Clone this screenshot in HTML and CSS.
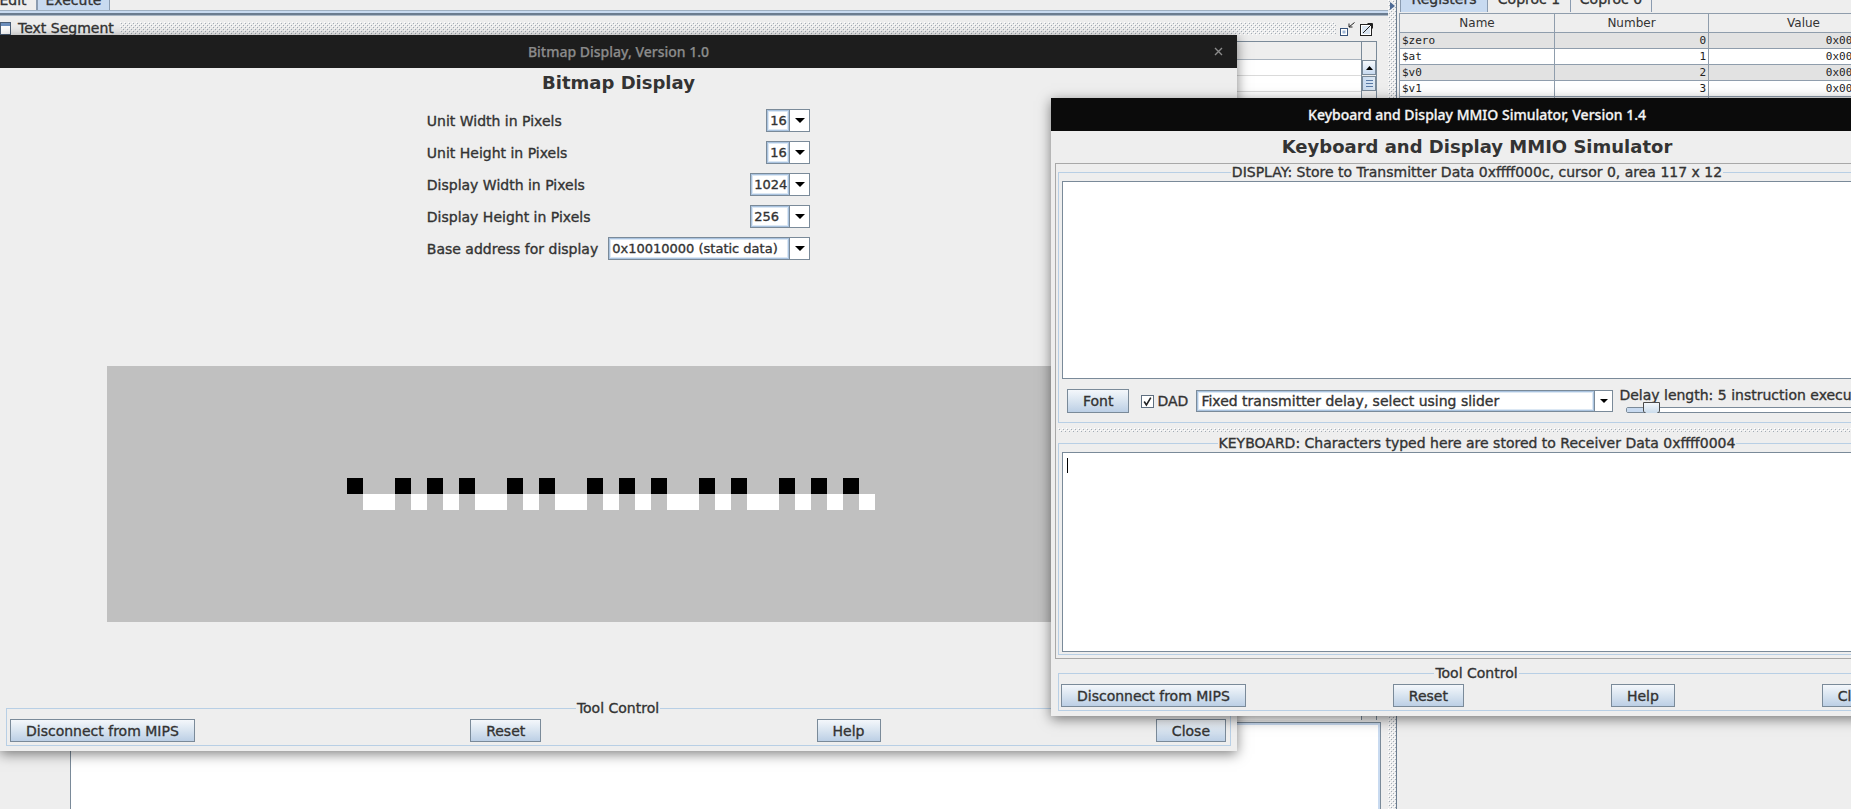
FILE: index.html
```html
<!DOCTYPE html>
<html lang="en">
<head>
<meta charset="utf-8">
<title>MARS - Bitmap Display / MMIO Simulator</title>
<link rel="stylesheet" href="styles.css">
</head>
<body>
<div class="desktop">
  <div class="ide">
    <div class="main">
      <div class="tabs">
        <div class="tab tab-edit"><span>Edit</span></div>
        <div class="tab tab-sel tab-exec"><span>Execute</span></div>
      </div>
      <div class="tabline"></div>
      <div class="iframe">
        <div class="if-head">
          <svg class="if-icon" width="11" height="13" viewBox="0 0 11 13"><rect x="0.5" y="0.5" width="10" height="12" fill="#fff" stroke="#4a5d75"/><rect x="1" y="1" width="9" height="3" fill="#6d8fbd"/></svg>
          <span class="if-title">Text Segment</span>
          <div class="bumps if-bumps"></div>
          <svg class="if-btn" width="16" height="14" viewBox="0 0 16 14"><rect x="0.5" y="6.5" width="7" height="7" fill="#fff" stroke="#36527a"/><rect x="2.5" y="8.5" width="3" height="3" fill="#9db6d6"/><path d="M9 5 L14.5 0.5" stroke="#222" fill="none"/><path d="M9 1.5 V5 H12.5" stroke="#222" fill="none"/></svg>
          <svg class="if-btn" width="14" height="14" viewBox="0 0 14 14"><rect x="0.5" y="2.5" width="11" height="11" fill="#fff" stroke="#222"/><rect x="2" y="4" width="8" height="8" fill="#dbe6f2"/><path d="M3 11 L11.5 2.5" stroke="#222" fill="none"/><path d="M7.5 1.5 H12.5 V6.5" stroke="#222" fill="none"/></svg>
        </div>
        <div class="if-body">
          <div class="ts-table">
            <div class="ts-head"></div>
            <div class="ts-row"></div>
            <div class="ts-row"></div>
            <div class="ts-row"></div>
            <div class="ts-row"></div>
            <div class="ts-row"></div>
            <div class="ts-row"></div>
          </div>
          <div class="vscroll">
            <div class="sb-btn"><svg width="7" height="4" viewBox="0 0 7 4"><path d="M0 4 H7 L3.5 0 Z" fill="#000"/></svg></div>
            <div class="sb-thumb"><i></i><i></i><i></i></div>
          </div>
        </div>
      </div>
      <div class="dataseg">
        <div class="ds-left"></div>
        <div class="ds-white"></div>
      </div>
    </div>
    <div class="vsplit bumps"><svg class="vs-arrow" width="5" height="8" viewBox="0 0 5 8"><path d="M0 0 L5 4 L0 8 Z" fill="#4d6a94"/></svg></div>
    <div class="regs">
      <div class="rtabs">
        <div class="rtab rt1"><span>Registers</span></div>
        <div class="rtab rt2"><span>Coproc 1</span></div>
        <div class="rtab rt3"><span>Coproc 0</span></div>
      </div>
      <table class="rtable">
        <colgroup><col class="col-name"><col class="col-num"><col class="col-val"></colgroup>
        <thead><tr><th>Name</th><th>Number</th><th>Value</th></tr></thead>
        <tbody>
          <tr><td>$zero</td><td class="r">0</td><td class="r v">0x00000000</td></tr>
          <tr><td>$at</td><td class="r">1</td><td class="r v">0x00000000</td></tr>
          <tr><td>$v0</td><td class="r">2</td><td class="r v">0x00000000</td></tr>
          <tr><td>$v1</td><td class="r">3</td><td class="r v">0x00000000</td></tr>
          <tr><td>$a0</td><td class="r">4</td><td class="r v">0x00000000</td></tr>
          <tr><td>$a1</td><td class="r">5</td><td class="r v">0x00000000</td></tr>
          <tr><td>$a2</td><td class="r">6</td><td class="r v">0x00000000</td></tr>
          <tr><td>$a3</td><td class="r">7</td><td class="r v">0x00000000</td></tr>
          <tr><td>$t0</td><td class="r">8</td><td class="r v">0x00000000</td></tr>
          <tr><td>$t1</td><td class="r">9</td><td class="r v">0x00000000</td></tr>
          <tr><td>$t2</td><td class="r">10</td><td class="r v">0x00000000</td></tr>
          <tr><td>$t3</td><td class="r">11</td><td class="r v">0x00000000</td></tr>
          <tr><td>$t4</td><td class="r">12</td><td class="r v">0x00000000</td></tr>
          <tr><td>$t5</td><td class="r">13</td><td class="r v">0x00000000</td></tr>
          <tr><td>$t6</td><td class="r">14</td><td class="r v">0x00000000</td></tr>
          <tr><td>$t7</td><td class="r">15</td><td class="r v">0x00000000</td></tr>
          <tr><td>$s0</td><td class="r">16</td><td class="r v">0x00000000</td></tr>
          <tr><td>$s1</td><td class="r">17</td><td class="r v">0x00000000</td></tr>
          <tr><td>$s2</td><td class="r">18</td><td class="r v">0x00000000</td></tr>
          <tr><td>$s3</td><td class="r">19</td><td class="r v">0x00000000</td></tr>
          <tr><td>$s4</td><td class="r">20</td><td class="r v">0x00000000</td></tr>
          <tr><td>$s5</td><td class="r">21</td><td class="r v">0x00000000</td></tr>
          <tr><td>$s6</td><td class="r">22</td><td class="r v">0x00000000</td></tr>
          <tr><td>$s7</td><td class="r">23</td><td class="r v">0x00000000</td></tr>
          <tr><td>$t8</td><td class="r">24</td><td class="r v">0x00000000</td></tr>
          <tr><td>$t9</td><td class="r">25</td><td class="r v">0x00000000</td></tr>
          <tr><td>$k0</td><td class="r">26</td><td class="r v">0x00000000</td></tr>
          <tr><td>$k1</td><td class="r">27</td><td class="r v">0x00000000</td></tr>
          <tr><td>$gp</td><td class="r">28</td><td class="r v">0x10008000</td></tr>
          <tr><td>$sp</td><td class="r">29</td><td class="r v">0x7fffeffc</td></tr>
          <tr><td>$fp</td><td class="r">30</td><td class="r v">0x00000000</td></tr>
          <tr><td>$ra</td><td class="r">31</td><td class="r v">0x00000000</td></tr>
          <tr><td>pc</td><td class="r"></td><td class="r v">0x00400000</td></tr>
          <tr><td>hi</td><td class="r"></td><td class="r v">0x00000000</td></tr>
          <tr><td>lo</td><td class="r"></td><td class="r v">0x00000000</td></tr>
        </tbody>
      </table>
    </div>
  </div>

  <div class="win bitmap">
    <div class="titlebar">
      <span class="ttl">Bitmap Display, Version 1.0</span>
      <svg class="tb-close" width="9" height="9" viewBox="0 0 9 9"><path d="M1 1 L8 8 M8 1 L1 8" stroke="#8b8b8b" stroke-width="1.4"/></svg>
    </div>
    <div class="heading">Bitmap Display</div>
    <div class="settings">
      <div class="set-lbl">Unit Width in Pixels</div>
      <div class="combo"><div class="combo-text cw-s">16</div><div class="combo-arrow"><svg width="10" height="5" viewBox="0 0 10 5"><path d="M0 0 H10 L5 5 Z" fill="#000"/></svg></div></div>
      <div class="set-lbl">Unit Height in Pixels</div>
      <div class="combo"><div class="combo-text cw-s">16</div><div class="combo-arrow"><svg width="10" height="5" viewBox="0 0 10 5"><path d="M0 0 H10 L5 5 Z" fill="#000"/></svg></div></div>
      <div class="set-lbl">Display Width in Pixels</div>
      <div class="combo"><div class="combo-text cw-m">1024</div><div class="combo-arrow"><svg width="10" height="5" viewBox="0 0 10 5"><path d="M0 0 H10 L5 5 Z" fill="#000"/></svg></div></div>
      <div class="set-lbl">Display Height in Pixels</div>
      <div class="combo"><div class="combo-text cw-m">256</div><div class="combo-arrow"><svg width="10" height="5" viewBox="0 0 10 5"><path d="M0 0 H10 L5 5 Z" fill="#000"/></svg></div></div>
      <div class="set-lbl">Base address for display</div>
      <div class="combo"><div class="combo-text cw-l">0x10010000 (static data)</div><div class="combo-arrow"><svg width="10" height="5" viewBox="0 0 10 5"><path d="M0 0 H10 L5 5 Z" fill="#000"/></svg></div></div>
    </div>
    <div class="canvas">
      <div class="px-b" style="grid-area:8/16"></div>
      <div class="px-b" style="grid-area:8/19"></div>
      <div class="px-b" style="grid-area:8/21"></div>
      <div class="px-b" style="grid-area:8/23"></div>
      <div class="px-b" style="grid-area:8/26"></div>
      <div class="px-b" style="grid-area:8/28"></div>
      <div class="px-b" style="grid-area:8/31"></div>
      <div class="px-b" style="grid-area:8/33"></div>
      <div class="px-b" style="grid-area:8/35"></div>
      <div class="px-b" style="grid-area:8/38"></div>
      <div class="px-b" style="grid-area:8/40"></div>
      <div class="px-b" style="grid-area:8/43"></div>
      <div class="px-b" style="grid-area:8/45"></div>
      <div class="px-b" style="grid-area:8/47"></div>
      <div class="px-w" style="grid-area:9/17"></div>
      <div class="px-w" style="grid-area:9/18"></div>
      <div class="px-w" style="grid-area:9/20"></div>
      <div class="px-w" style="grid-area:9/22"></div>
      <div class="px-w" style="grid-area:9/24"></div>
      <div class="px-w" style="grid-area:9/25"></div>
      <div class="px-w" style="grid-area:9/27"></div>
      <div class="px-w" style="grid-area:9/29"></div>
      <div class="px-w" style="grid-area:9/30"></div>
      <div class="px-w" style="grid-area:9/32"></div>
      <div class="px-w" style="grid-area:9/34"></div>
      <div class="px-w" style="grid-area:9/36"></div>
      <div class="px-w" style="grid-area:9/37"></div>
      <div class="px-w" style="grid-area:9/39"></div>
      <div class="px-w" style="grid-area:9/41"></div>
      <div class="px-w" style="grid-area:9/42"></div>
      <div class="px-w" style="grid-area:9/44"></div>
      <div class="px-w" style="grid-area:9/46"></div>
      <div class="px-w" style="grid-area:9/48"></div>
    </div>
    <fieldset class="toolctl">
      <legend>Tool Control</legend>
      <button class="btn">Disconnect from MIPS</button>
      <button class="btn">Reset</button>
      <button class="btn">Help</button>
      <button class="btn">Close</button>
    </fieldset>
  </div>

  <div class="win mmio">
    <div class="titlebar">
      <span class="ttl">Keyboard and Display MMIO Simulator, Version 1.4</span>
    </div>
    <div class="heading">Keyboard and Display MMIO Simulator</div>
    <div class="pane">
      <fieldset class="sect">
        <legend>DISPLAY: Store to Transmitter Data 0xffff000c, cursor 0, area 117 x 12</legend>
        <div class="ta ta-disp"></div>
        <div class="controls">
          <button class="btn btn-font">Font</button>
          <svg class="chk" width="13" height="13" viewBox="0 0 13 13"><rect x="0.5" y="0.5" width="12" height="12" fill="#fff" stroke="#5f6f80"/><path d="M3.2 6.5 L5.4 10 L9.8 2.6" fill="none" stroke="#222" stroke-width="1.6"/></svg>
          <span class="chk-lbl">DAD</span>
          <div class="combo combo2"><div class="combo-text">Fixed transmitter delay, select using slider</div><div class="combo-arrow"><svg width="8" height="4" viewBox="0 0 8 4"><path d="M0 0 H8 L4 4 Z" fill="#000"/></svg></div></div>
          <div class="slider-block">
            <div class="slider-lbl">Delay length: 5 instruction executions</div>
            <div class="slider">
              <div class="track"><div class="track-fill"></div></div>
              <svg class="thumb" width="18" height="16" viewBox="0 0 18 16"><defs><linearGradient id="tg" x1="0" y1="0" x2="0" y2="1"><stop offset="0" stop-color="#f6f9fc"/><stop offset="1" stop-color="#b8cfe5"/></linearGradient></defs><path d="M0.5 0.5 H16.5 V9.5 L8.5 15.5 L0.5 9.5 Z" fill="url(#tg)" stroke="#4a4a4a"/></svg>
            </div>
          </div>
        </div>
      </fieldset>
      <div class="splitter"><div class="bumps"></div></div>
      <fieldset class="sect sect-kbd">
        <legend>KEYBOARD: Characters typed here are stored to Receiver Data 0xffff0004</legend>
        <div class="ta ta-kbd"><div class="caret"></div></div>
      </fieldset>
    </div>
    <fieldset class="toolctl">
      <legend>Tool Control</legend>
      <button class="btn">Disconnect from MIPS</button>
      <button class="btn">Reset</button>
      <button class="btn">Help</button>
      <button class="btn">Close</button>
    </fieldset>
  </div>
</div>
</body>
</html>
```

FILE: styles.css
```css
* { box-sizing: border-box; }
html, body { margin: 0; padding: 0; }
body {
  width: 1851px; height: 809px; overflow: hidden;
  background: #eeeeee;
  font-family: "DejaVu Sans", Verdana, sans-serif;
  font-size: 14px; font-weight: normal; color: #333333;
  -webkit-text-stroke: 0.35px #333333;
}
.desktop { position: relative; width: 1851px; height: 809px; overflow: hidden; }

/* ---------- IDE background ---------- */
.ide { display: flex; width: 100%; height: 100%; }
.main { width: 1388px; flex: none; display: flex; flex-direction: column; }
.tabs { height: 10px; flex: none; display: flex; overflow: hidden; }
.tab { display: flex; align-items: flex-end; justify-content: center; border-right: 1px solid #8a9bb0; }
.tab span { line-height: 14px; margin-bottom: 3px; white-space: nowrap; }
.tab-edit { width: 47px; margin-left: -10px; }
.tab-exec { width: 73px; }
.tab-sel { background: #c8daf0; border-left: 1px solid #8a9bb0; }
.tabline {
  height: 7px; flex: none; border-top: 1px solid #9fb0c2;
  background: linear-gradient(#c8daf0 0 2px, #6b7c8f 2px 4px, #a9b6c4 4px 5px, #eeeeee 5px);
}
.iframe { flex: 1; min-height: 0; display: flex; flex-direction: column; margin-right: 11px; }
.if-head { height: 15px; margin-top: 4px; flex: none; display: flex; align-items: center; }
.if-icon { flex: none; }
.if-title { margin-left: 7px; line-height: 15px; white-space: nowrap; }
.bumps {
  background-color: #eeeeee;
  background-image:
    conic-gradient(at 1px 1px, transparent 75%, #ffffff 0),
    conic-gradient(at 1px 1px, transparent 75%, #ffffff 0),
    conic-gradient(at 1px 1px, transparent 75%, #a3acb6 0),
    conic-gradient(at 1px 1px, transparent 75%, #a3acb6 0);
  background-size: 4px 4px;
  background-position: 0 0, 2px 2px, 1px 1px, 3px 3px;
}
.if-bumps { flex: 1; height: 13px; margin: 0 4px 0 6px; }
.if-btn { flex: none; }
.if-btn + .if-btn { margin-left: 4px; margin-right: 3px; }
.if-body {
  flex: 1; margin-top: 5px; display: flex;
  border-top: 1px solid #7a8a99; border-right: 1px solid #7a8a99; background: #ffffff;
}
.ts-table { flex: 1; display: flex; flex-direction: column; }
.ts-head { height: 18px; flex: none; background: #eeeeee; border-bottom: 1px solid #a9b3be; }
.ts-row { height: 16px; flex: none; border-bottom: 1px solid #dadada; }
.vscroll {
  width: 15px; flex: none; display: flex; flex-direction: column;
  border-left: 1px solid #7a8a99; background: #eeeeee; padding-top: 18px;
}
.sb-btn {
  height: 15px; border: 1px solid #7a8a99; background: linear-gradient(#f6f9fc, #c8daf0);
  display: flex; align-items: center; justify-content: center;
}
.sb-thumb {
  height: 15px; margin-top: 1px; border: 1px solid #7a8a99;
  background: linear-gradient(90deg, #c8daf0, #dde8f3);
  display: flex; flex-direction: column; justify-content: center; align-items: center; gap: 2px;
}
.sb-thumb i { display: block; width: 7px; height: 1px; background: #5a7aa6; }
.dataseg { height: 89px; flex: none; display: flex; padding-top: 2px; margin-right: 7px; }
.ds-left { width: 71px; border-right: 1px solid #7a8a99; }
.ds-white {
  flex: 1; background: #ffffff; border-top: 1px solid #7a8a99; border-right: 1px solid #7a8a99;
  box-shadow: inset 0 2px 0 #c8daf0, inset -2px 0 0 #c8daf0;
}
.vsplit { width: 9px; flex: none; border-right: 1px solid #6b7c8f; display: flex; flex-direction: column; }
.vs-arrow { margin: 2px 0 0 2px; }
.regs { flex: 1; min-width: 0; overflow: hidden; padding-left: 2px; }
.rtabs { height: 12px; display: flex; overflow: hidden; margin-left: 1px; }
.rtab { display: flex; align-items: flex-end; justify-content: center; border-right: 1px solid #8a9bb0; }
.rtab span { line-height: 14px; margin-bottom: 6px; white-space: nowrap; }
.rt1 { width: 88px; background: #c8daf0; border-left: 1px solid #8a9bb0; }
.rt2 { width: 83px; }
.rt3 { width: 81px; }
.rtable {
  margin-top: 1px; border-collapse: collapse; table-layout: fixed; width: 499px;
  font-family: "DejaVu Sans Mono", monospace; font-size: 11px; font-weight: normal; color: #222222;
  -webkit-text-stroke: 0;
}
.col-name { width: 155px; }
.col-num { width: 154px; }
.col-val { width: 190px; }
.rtable th {
  height: 19px; padding: 0; background: #eeeeee; border: 1px solid #8f9dac;
  font-family: "DejaVu Sans", sans-serif; font-size: 12px; font-weight: normal; color: #333333;
}
.rtable td { height: 16px; padding: 0 2px; line-height: 14px; border: 1px solid #8f9dac; white-space: nowrap; overflow: hidden; }
.rtable tbody tr:nth-child(odd) td { background: #e2e2e2; }
.rtable tbody tr:nth-child(even) td { background: #ffffff; }
.rtable td.r { text-align: right; }
.rtable td.v { padding-right: 6px; }

/* ---------- Windows ---------- */
.win {
  position: absolute; display: flex; flex-direction: column;
  background: #eeeeee; box-shadow: 0 3px 12px rgba(0, 0, 0, 0.5);
}
.bitmap { left: 0; top: 35px; width: 1237px; height: 716px; }
.mmio { left: 1051px; top: 98px; width: 852px; height: 618px; }
.titlebar {
  height: 33px; flex: none; display: grid; grid-template-columns: 1fr auto 1fr; align-items: center;
  font-family: "Noto Sans", "DejaVu Sans", sans-serif; font-weight: 500; font-size: 14px;
}
.titlebar .ttl { grid-column: 2; white-space: nowrap; }
.bitmap .titlebar { background: #1d1d1d; color: #8b8b8b; -webkit-text-stroke: 0.25px #8b8b8b; }
.mmio .titlebar { background: #0b0b0b; color: #f4f4f4; -webkit-text-stroke: 0.3px #f4f4f4; }
.tb-close { grid-column: 3; justify-self: end; margin-right: 14px; }
.heading {
  flex: none; text-align: center; font-size: 18px; font-weight: bold; line-height: 22px; margin-top: 4px;
  white-space: nowrap; -webkit-text-stroke: 0;
}

.settings {
  display: grid; grid-template-columns: auto auto; column-gap: 10px; row-gap: 9px;
  justify-content: center; margin-top: 15px; flex: none;
}
.set-lbl { align-self: center; white-space: nowrap; }
.combo { justify-self: end; display: flex; height: 23px; border: 1px solid #7a8a99; background: #ffffff; }
.combo-text {
  padding-left: 3px; font-size: 13px; line-height: 21px; white-space: nowrap; overflow: hidden;
  box-shadow: inset 0 0 0 1px #aac3df, inset 0 0 0 2px #dce8f4;
}
.cw-s { width: 22px; }
.cw-m { width: 38px; }
.cw-l { width: 180px; }
.combo-arrow { width: 20px; flex: none; border-left: 1px solid #7a8a99; display: flex; align-items: center; justify-content: center; }

.canvas {
  flex: none; width: 1024px; height: 256px; margin: 106px auto 0; background: #c0c0c0;
  display: grid; grid-template-columns: repeat(64, 16px); grid-template-rows: repeat(16, 16px);
}
.px-b { background: #000000; }
.px-w { background: #ffffff; }

.toolctl {
  flex: none; margin: auto 6px 5px; border: 1px solid #b8cfe5; padding: 4px 4px 3px 3px;
  display: flex; justify-content: space-between; min-width: 0;
}
.toolctl legend, .sect legend { margin: 0 auto; padding: 0 1px; line-height: 14px; white-space: nowrap; }
.btn {
  height: 23px; padding: 0 15px; border: 1px solid #7a8a99;
  background: linear-gradient(#f4f7fb, #dbe6f1 45%, #bccfe5);
  font: normal 14px "DejaVu Sans", sans-serif; color: #333333; white-space: nowrap;
  -webkit-text-stroke: 0.35px #333333;
  display: flex; align-items: center;
}

.mmio .heading { margin-top: 5px; }
.pane { flex: none; margin: 5px 4px 0; border: 1px solid #a8a8a8; padding: 1px 2px 3px; }
.sect { margin: 0; border: 1px solid #b8cfe5; padding: 2px 3px 9px; min-width: 0; }
.ta { background: #ffffff; border: 1px solid #7a8a99; }
.ta-disp { height: 198px; }
.controls { display: flex; align-items: center; height: 24px; margin-top: 10px; padding-left: 5px; white-space: nowrap; overflow: hidden; }
.btn-font { height: 24px; flex: none; }
.chk { margin-left: 12px; flex: none; }
.chk-lbl { margin-left: 3px; }
.combo2 { margin-left: 8px; height: 22px; width: 417px; flex: none; }
.combo2 .combo-text { flex: 1; padding-left: 4px; font-size: 14px; line-height: 20px; }
.combo2 .combo-arrow { width: 18px; }
.slider-block { margin: -1px 0 0 6px; align-self: flex-start; display: flex; flex-direction: column; flex: 1; min-width: 0; }
.slider-lbl { line-height: 14px; white-space: nowrap; }
.slider { position: relative; height: 16px; margin: 0 0 0 7px; }
.track { position: absolute; left: 0; right: 0; top: 5px; height: 6px; border: 1px solid #7a8a99; border-radius: 2px; background: #ffffff; overflow: hidden; }
.track-fill { width: 24px; height: 100%; background: #c8daf0; }
.thumb { position: absolute; left: 17px; top: 0; }
.splitter { height: 13px; padding: 5px 0 4px; }
.splitter .bumps { height: 4px; }
.sect-kbd { padding-bottom: 2px; }
.ta-kbd { height: 200px; padding: 5px 0 0 4px; }
.caret { width: 1px; height: 15px; background: #000000; }
.mmio .toolctl { margin: 7px 7px 0; padding: 4px 3px 3px 2px; }
```
